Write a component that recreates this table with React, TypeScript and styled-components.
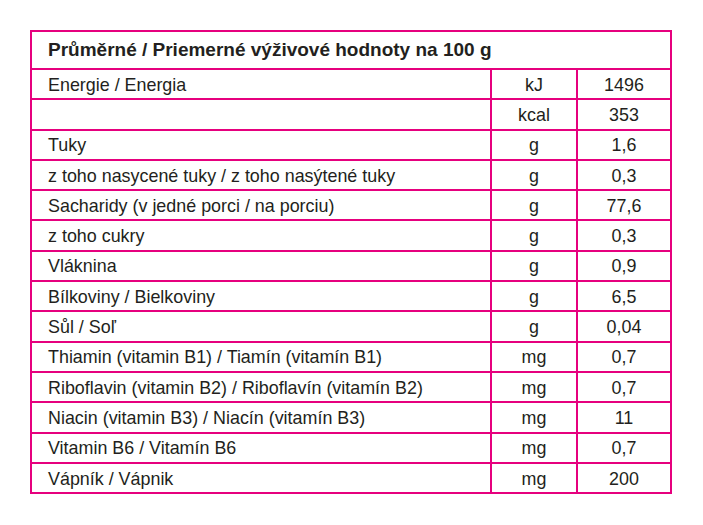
import React from "react";
import styled, { createGlobalStyle } from "styled-components";

const Global = createGlobalStyle`
  html, body { margin: 0; padding: 0; background: #ffffff; }
  body { font-family: "Liberation Sans", Arial, sans-serif; color: #231f20; }
`;

const Page = styled.div`
  padding: 30px 0 0 30px;
`;

const Table = styled.table`
  border-collapse: collapse;
  table-layout: fixed;
  width: 642px;
  border: 2px solid #e6007e;
`;

const HeadCell = styled.th`
  border: 2px solid #e6007e;
  height: 36px;
  padding: 0 0 0 16px;
  text-align: left;
  font-size: 19px;
  font-weight: 700;
  letter-spacing: 0;
  white-space: nowrap;
`;

const Cell = styled.td<{ $align?: "left" | "center" }>`
  border: 2px solid #e6007e;
  height: 27.3px;
  padding: 1px 0 0 ${(p) => (p.$align === "center" ? "0" : "16px")};
  text-align: ${(p) => p.$align ?? "left"};
  font-size: 17.9px;
  line-height: 20px;
  letter-spacing: 0;
  white-space: nowrap;
`;

type Row = { name: string; unit: string; value: string };

const rows: Row[] = [
  { name: "Energie / Energia", unit: "kJ", value: "1496" },
  { name: "", unit: "kcal", value: "353" },
  { name: "Tuky", unit: "g", value: "1,6" },
  { name: "z toho nasycené tuky / z toho nasýtené tuky", unit: "g", value: "0,3" },
  { name: "Sacharidy (v jedné porci / na porciu)", unit: "g", value: "77,6" },
  { name: "z toho cukry", unit: "g", value: "0,3" },
  { name: "Vláknina", unit: "g", value: "0,9" },
  { name: "Bílkoviny / Bielkoviny", unit: "g", value: "6,5" },
  { name: "Sůl / Soľ", unit: "g", value: "0,04" },
  { name: "Thiamin (vitamin B1) / Tiamín (vitamín B1)", unit: "mg", value: "0,7" },
  { name: "Riboflavin (vitamin B2) / Riboflavín (vitamín B2)", unit: "mg", value: "0,7" },
  { name: "Niacin (vitamin B3) / Niacín (vitamín B3)", unit: "mg", value: "11" },
  { name: "Vitamin B6 / Vitamín B6", unit: "mg", value: "0,7" },
  { name: "Vápník / Vápnik", unit: "mg", value: "200" },
];

export default function App() {
  return (
    <Page>
      <Global />
      <Table>
        <colgroup>
          <col style={{ width: 460 }} />
          <col style={{ width: 86 }} />
          <col style={{ width: 94 }} />
        </colgroup>
        <thead>
          <tr>
            <HeadCell colSpan={3}>Průměrné / Priemerné výživové hodnoty na 100 g</HeadCell>
          </tr>
        </thead>
        <tbody>
          {rows.map((r, i) => (
            <tr key={i}>
              <Cell>{r.name}</Cell>
              <Cell $align="center">{r.unit}</Cell>
              <Cell $align="center">{r.value}</Cell>
            </tr>
          ))}
        </tbody>
      </Table>
    </Page>
  );
}
